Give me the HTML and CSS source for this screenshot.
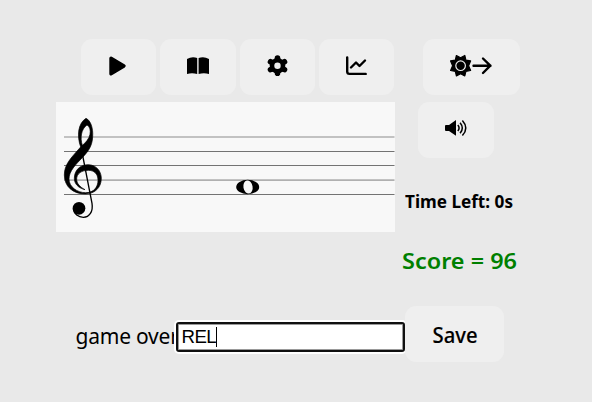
FILE: index.html
```
<!DOCTYPE html>
<html lang="en">
<head>
<meta charset="utf-8">
<title>Note trainer</title>
<link rel="stylesheet" href="styles.css">
</head>
<body>
<main class="app">
  <nav class="toolbar">
    <button class="btn" aria-label="Play"><svg width="76" height="56"><path d="M30 19.2L43 27L30 34.8Z" fill="#000" stroke="#000" stroke-width="3.4" stroke-linejoin="round"/></svg></button>
    <button class="btn" aria-label="Guide"><svg width="76" height="56"><path d="M27 20Q32 17 37.2 19V35Q32 33.5 27 35ZM38.6 19Q44 17 49 20V35Q44 33.5 38.6 35Z"/></svg></button>
    <button class="btn" aria-label="Settings"><svg width="76" height="56"><g transform="translate(37.5 26.7)"><g stroke="#000" stroke-width="5.6" stroke-linecap="round"><path d="M0-7.6V7.6M-7-3.9L7 3.9M-7 3.9L7-3.9"/></g><circle r="7.8"/><circle r="3.2" fill="#efefef"/></g></svg></button>
    <button class="btn" aria-label="Statistics"><svg width="76" height="56"><path d="M28.2 18.5V32.5Q28.2 34.9 30.5 34.9H46.7M32 28.5L37 23.5L40.5 27L46 21.5" fill="none" stroke="#000" stroke-width="2.4" stroke-linecap="round" stroke-linejoin="round"/></svg></button>
    <button class="btn btn-theme" aria-label="Theme"><svg width="97" height="56"><g transform="translate(37.6 26.7)"><path d="M0-8L4.2-10.2L5.3-5.6L10-4.8L8 0L10 4.8L5.3 5.6L4.2 10.2L0 8L-4.2 10.2L-5.3 5.6L-10 4.8L-8 0L-10-4.8L-5.3-5.6L-4.2-10.2Z" stroke="#000" stroke-width="1.2" stroke-linejoin="round"/><circle r="4.8" fill="none" stroke="#efefef" stroke-width="1.2"/></g><path d="M50.5 26.7H67.5M60 19.5L67.3 26.7L60 34" fill="none" stroke="#000" stroke-width="2.4" stroke-linecap="round" stroke-linejoin="round"/></svg></button>
  </nav>
  <section class="board">
    <svg class="staff" width="339" height="130">
      <g class="lines"><path d="M8 35H338.5M8 78.2H338.5" stroke="#b0b0b0" stroke-width="1.7"/><path d="M8 49.5H338.5M8 63.5H338.5M8 92.5H338.5" stroke="#737373"/></g>
      <g transform="translate(-6 -7) scale(.33333)">
        <path stroke="#000" stroke-width="2" fill-rule="evenodd" d="M92 156C80 122 84 85 108 70C122 76 130 100 128 125C127 155 112 172 96 189C78 208 57 228 57 252C57 276 82 293 107 293C132 293 144 276 144 256C144 236 132 226 115 226C95 226 80 236 80 252C80 266 90 276 105 284C84 279 73 266 73 250C73 226 90 209 114 209C138 209 154 228 154 250C154 278 134 297 106 297C68 297 43 274 43 240C43 208 62 190 92 156ZM97 151C90 130 93 102 111 90C120 95 122 106 120 118C117 132 108 142 97 151Z"/>
        <path d="M93 156L126 325C130 350 118 367 100 367C85 367 72 357 70 342" fill="none" stroke="#000" stroke-width="4"/><circle cx="87" cy="340" r="19"/>
      </g>
      <ellipse cx="191.7" cy="85" rx="11.5" ry="7.2"/><ellipse cx="192" cy="85" rx="4.6" ry="6.6" fill="#f8f8f8" transform="rotate(-10 192 85)"/>
    </svg>
    <aside class="side">
      <button class="btn" aria-label="Sound"><svg width="76" height="56"><path d="M27 24Q27 23 28 23H31L38 18V33.7L31 29H28Q27 29 27 28Z"/><path d="M39.8 23Q42.4 26 39.8 29M42.1 20.7Q46.5 26 42.1 31.3M44.4 18.4Q51.2 26 44.4 33.6" fill="none" stroke="#000" stroke-width="1.5"/></svg></button>
      <svg class="time" width="120" height="24"><text x="0" y="17" textLength="108" lengthAdjust="spacingAndGlyphs">Time Left: 0s</text></svg>
      <svg class="score" width="130" height="36"><text x="0" y="24" textLength="115" lengthAdjust="spacingAndGlyphs">Score = 96</text></svg>
    </aside>
  </section>
  <form class="save-row">
    <label class="label" for="name">game over</label>
    <div class="field" id="name">REL<i class="caret"></i></div>
    <button class="btn btn-save" type="button"><svg width="99" height="56"><text x="27.5" y="37" textLength="45" lengthAdjust="spacingAndGlyphs">Save</text></svg></button>
  </form>
</main>
</body>
</html>
```
FILE: styles.css
```
* { box-sizing: border-box; }
body { margin: 0; background: #e9e9e9; font-family: "Noto Sans", sans-serif; color: #000; }
.app { width: 592px; height: 402px; padding-top: 39px; overflow: hidden; }
svg { display: block; }
.toolbar { display: flex; gap: 4px; padding-left: 81px; }
.btn { width: 75.3px; height: 56px; flex: none; padding: 0; border: 0; border-radius: 11px; background: #efefef; overflow: hidden; }
.btn-theme { width: 97px; margin-left: 25px; }
.board { display: flex; margin-top: 7px; padding-left: 56px; }
.staff { background: #f8f8f8; flex: none; }
.side { width: 160px; height: 204px; flex: none; }
.side .btn { display: block; width: 76px; margin-left: 23px; }
.time { margin: 33px 0 0 10px; font-size: 17px; font-weight: 700; }
.score { margin: 30px 0 0 6.5px; font-size: 22px; font-weight: 600; fill: #008000; overflow: visible; }
.save-row { display: flex; align-items: center; height: 56px; padding-left: 75.5px; }
.label { width: 100.5px; font-size: 21px; line-height: 56px; white-space: nowrap; margin-top: 4px; letter-spacing: -.22px; }
.field { position: relative; width: 229px; height: 30px; margin-top: 5px; padding-left: 3.5px; display: flex; align-items: center; border: 2px solid #101010; border-radius: 3px; background: #fff; box-shadow: 0 0 0 2px #fff, inset 0 0 0 1px #999; font: 18.7px "Liberation Sans", sans-serif; letter-spacing: -.6px; }
.caret { width: 1px; height: 20px; background: #000; }
.btn-save { position: relative; width: 99px; font: 500 21.5px "Noto Sans", sans-serif; }
.btn-save text { stroke: #000; stroke-width: .15px; }
```
